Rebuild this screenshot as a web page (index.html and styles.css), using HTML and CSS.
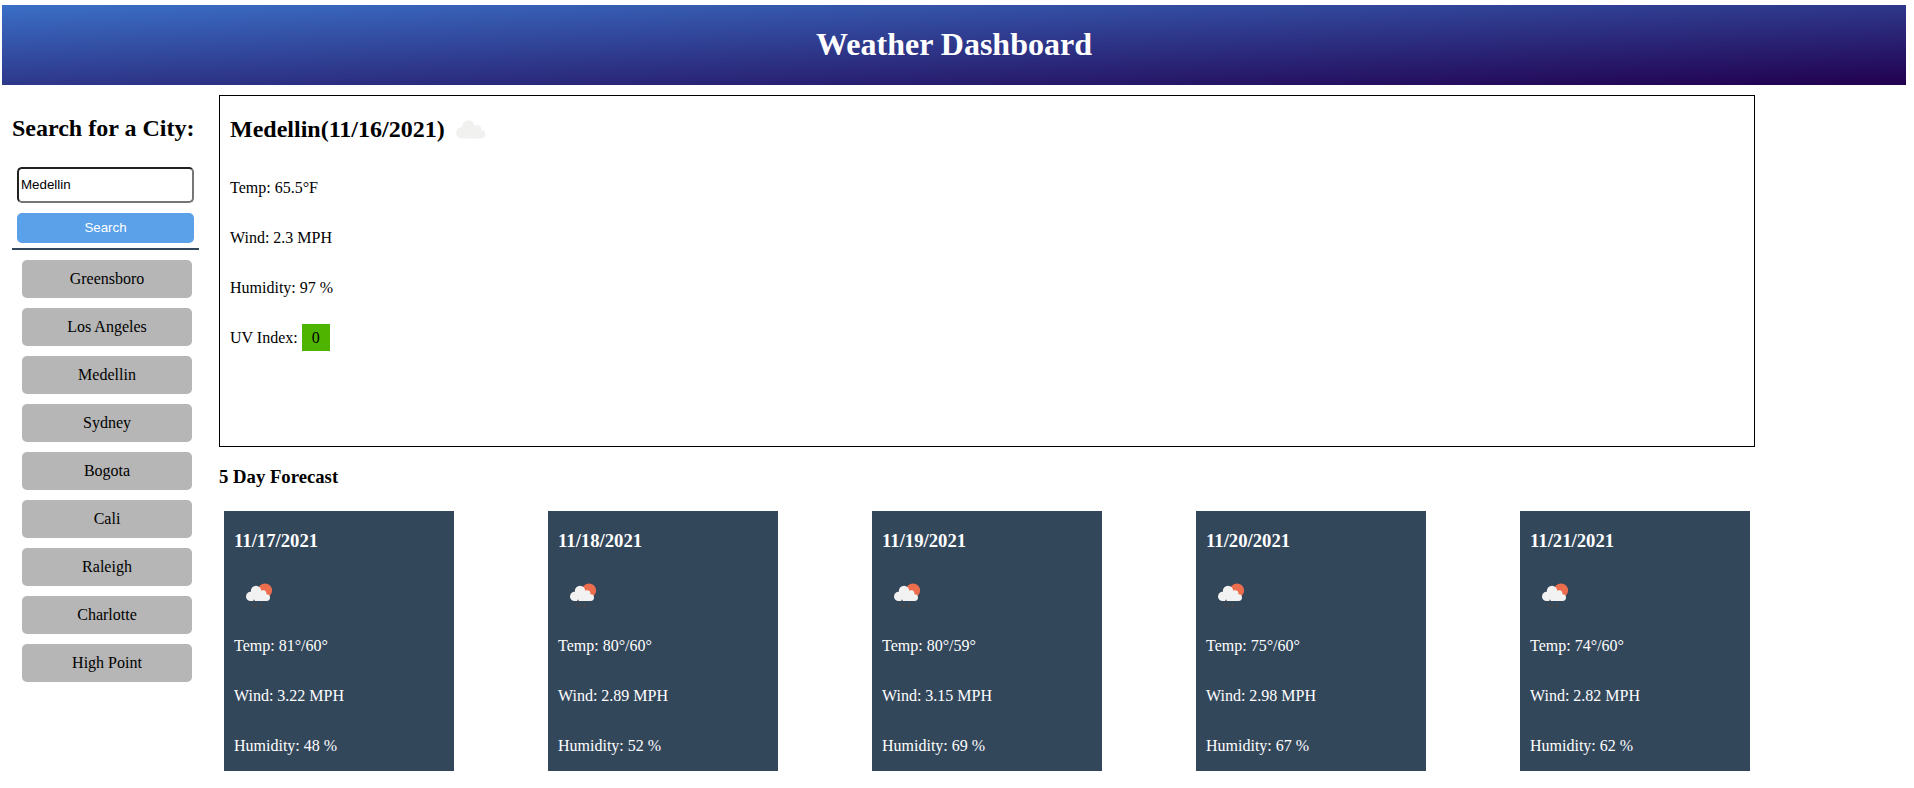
FILE: index.html
```
<!DOCTYPE html>
<html lang="en">
<head>
<meta charset="UTF-8">
<title>Weather Dashboard</title>
<link rel="stylesheet" href="styles.css">
</head>
<body>
<svg class="defs" width="0" height="0" aria-hidden="true">
  <symbol id="rain" viewBox="0 0 50 50">
    <circle cx="31" cy="20.5" r="7.1" fill="#ec6e4c"/>
    <g fill="#f2f2f2">
      <circle cx="16.6" cy="26.4" r="4.6"/>
      <circle cx="22" cy="20.9" r="5.2"/>
      <circle cx="29" cy="23.6" r="3.4"/>
      <circle cx="32.6" cy="27.6" r="3.4"/>
      <rect x="16.6" y="22.5" width="14" height="8.5"/>
      <rect x="28" y="27" width="4.6" height="4"/>
    </g>
    <path d="M20 29.8v1.4M18.9 33l-1.3 3M23 32.6l-2.2 5.6M27.8 32.6l-2.2 5.8" stroke="#48484a" stroke-width="1.2" fill="none"/>
  </symbol>
</svg>
<header class="banner"><h1>Weather Dashboard</h1></header>
<div class="layout">
  <aside class="sidebar">
    <div class="search">
      <h2>Search for a City:</h2>
      <input class="city-input" type="text" value="Medellin">
      <button class="search-btn">Search</button>
    </div>
    <ul class="history">
      <li>Greensboro</li>
      <li>Los Angeles</li>
      <li>Medellin</li>
      <li>Sydney</li>
      <li>Bogota</li>
      <li>Cali</li>
      <li>Raleigh</li>
      <li>Charlotte</li>
      <li>High Point</li>
    </ul>
  </aside>
  <main class="content">
    <section class="current">
      <h2>Medellin(11/16/2021)
        <svg class="cloud" viewBox="0 0 30 19" fill="#f1f1f0">
          <circle cx="5.8" cy="12.8" r="5.7"/>
          <circle cx="12.4" cy="6.7" r="6.4"/>
          <circle cx="21" cy="9.3" r="4.3"/>
          <circle cx="25.2" cy="14.3" r="4.2"/>
          <rect x="5.8" y="8.5" width="17" height="10"/>
          <rect x="20" y="13" width="5.2" height="5.5"/>
        </svg>
      </h2>
      <p>Temp: 65.5°F</p>
      <p>Wind: 2.3 MPH</p>
      <p>Humidity: 97 %</p>
      <p>UV Index: <span class="uv">0</span></p>
    </section>
    <h3 class="forecast-title">5 Day Forecast</h3>
    <section class="forecast">
      <article class="card"><h3>11/17/2021</h3><svg class="icon"><use href="#rain"/></svg><p>Temp: 81°/60°</p><p>Wind: 3.22 MPH</p><p>Humidity: 48 %</p></article>
      <article class="card"><h3>11/18/2021</h3><svg class="icon"><use href="#rain"/></svg><p>Temp: 80°/60°</p><p>Wind: 2.89 MPH</p><p>Humidity: 52 %</p></article>
      <article class="card"><h3>11/19/2021</h3><svg class="icon"><use href="#rain"/></svg><p>Temp: 80°/59°</p><p>Wind: 3.15 MPH</p><p>Humidity: 69 %</p></article>
      <article class="card"><h3>11/20/2021</h3><svg class="icon"><use href="#rain"/></svg><p>Temp: 75°/60°</p><p>Wind: 2.98 MPH</p><p>Humidity: 67 %</p></article>
      <article class="card"><h3>11/21/2021</h3><svg class="icon"><use href="#rain"/></svg><p>Temp: 74°/60°</p><p>Wind: 2.82 MPH</p><p>Humidity: 62 %</p></article>
    </section>
  </main>
</div>
</body>
</html>
```
FILE: styles.css
```
* { box-sizing: border-box; }

body {
  margin: 0;
  padding: 5px 8px 0 2px;
  background: #fff;
  color: #000;
  font: 16px/18px "Liberation Serif", "Times New Roman", serif;
}

h1, h2, h3, p, ul { margin: 0; padding: 0; }

.defs { display: block; }

.banner {
  display: flex;
  justify-content: center;
  align-items: center;
  height: 80px;
  padding-bottom: 2px;
  background: linear-gradient(to bottom right, #3a6fc6, #22004f);
  color: #fff;
}

.banner h1 { font-size: 32px; line-height: 36px; }

.layout {
  display: flex;
  gap: 20px;
  padding: 10px 0 0 10px;
}

.sidebar { width: 187px; flex: none; }

.search {
  display: flex;
  flex-direction: column;
  height: 155px;
  border-bottom: 2px solid #33475b;
}

.search h2 {
  margin: 20px 0 25px;
  font-size: 24px;
  line-height: 27px;
  white-space: nowrap;
}

.city-input, .search-btn {
  width: 177px;
  margin: 0 5px;
  border-radius: 5px;
  font: 13.333px "Liberation Sans", Arial, sans-serif;
}

.city-input {
  height: 36px;
  padding: 0 2px 2px;
  border: 2px inset #767676;
  background: #fff;
  color: #000;
}

.search-btn {
  height: 30px;
  margin-top: 10px;
  padding: 0 0 2px;
  border: 0;
  background: #5aa1ea;
  color: #fff;
}

.history {
  display: grid;
  gap: 10px;
  padding: 10px 7px 0 10px;
  list-style: none;
}

.history li {
  height: 38px;
  padding: 10px;
  border-radius: 5px;
  background: #b6b6b6;
  text-align: center;
}

.content { width: 1536px; flex: none; }

.current {
  height: 352px;
  padding: 20px 10px 0;
  border: 1px solid #000;
}

.current h2 {
  display: flex;
  align-items: center;
  gap: 11px;
  margin-bottom: 36px;
  font-size: 24px;
  line-height: 27px;
}

.cloud { width: 30px; height: 19px; }

.current p, .card p { margin-bottom: 32px; }

.uv {
  display: inline-block;
  margin: -5px 0 -4px;
  padding: 5px 10px 4px;
  background: #4eb400;
}

.forecast-title {
  margin: 19px 0 24px;
  font-size: 18.72px;
  line-height: 21px;
}

.forecast {
  display: flex;
  justify-content: space-between;
  padding: 0 5px;
}

.card {
  width: 230px;
  height: 260px;
  padding: 19px 10px 0;
  background: #33475b;
  color: #fff;
}

.card h3 { font-size: 18.72px; line-height: 21px; }

.icon {
  display: block;
  width: 50px;
  height: 50px;
  margin: 19px 0 17px;
}
```
